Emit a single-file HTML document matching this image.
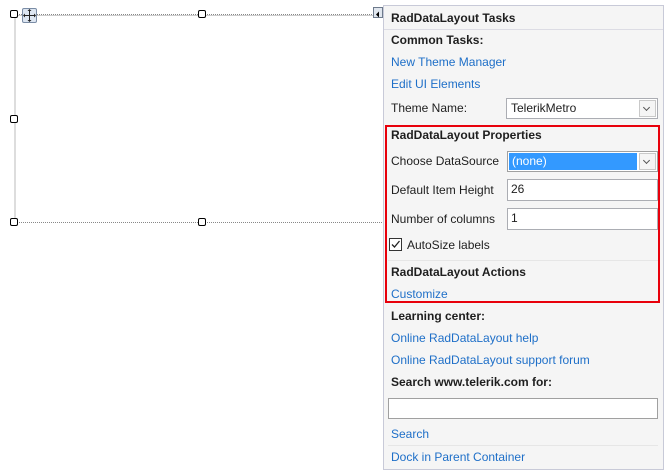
<!DOCTYPE html>
<html><head><style>
body{margin:0;width:666px;height:474px;background:#fff;position:relative;overflow:hidden;font-family:"Liberation Sans",sans-serif;font-size:12px;color:#1e1e1e}
.a{position:absolute;white-space:nowrap}
.b{font-weight:bold}
.l{color:#1e6fc8}
.h{position:absolute;width:6px;height:6px;border:1px solid #000;background:#fff;border-radius:2px}
.in{position:absolute;background:#fff;border:1px solid #abadb3;height:19px;box-sizing:border-box}
.dd{position:absolute;right:1px;top:1px;width:17px;height:17px;border:1px solid #c9c9c9;box-sizing:border-box;background:#f5f5f5}
.dd:after{content:"";position:absolute;left:4px;top:4px;width:4px;height:4px;border-right:1px solid #555;border-bottom:1px solid #555;transform:rotate(45deg)}
.sep{position:absolute;left:388px;width:270px;height:1px;background:#e6e6e6}
</style></head><body>
<div class="a" style="left:14px;top:14px;width:369px;height:207px;border-top:1px dotted #888;border-left:1px dotted #888;border-bottom:1px dotted #888"></div>
<div class="a" style="left:15px;top:15px;width:368px;height:1px;background:#ccc"></div>
<div class="a" style="left:14px;top:16px;width:2px;height:204px;background:#ddd"></div>
<div class="h" style="left:10px;top:10px"></div>
<div class="h" style="left:198px;top:10px"></div>
<div class="h" style="left:10px;top:115px"></div>
<div class="h" style="left:10px;top:218px"></div>
<div class="h" style="left:198px;top:218px"></div>
<div class="a" style="left:22px;top:8px;width:13px;height:13px;border:1px solid #7a8ca5;background:#dde6f2;border-radius:2px">
<svg width="13" height="13" viewBox="0 0 13 13"><path d="M6.5 1v11M1 6.5h11" stroke="#222" stroke-width="1"/><path d="M6.5 0l-2 2h4zM6.5 13l-2-2h4zM0 6.5l2-2v4zM13 6.5l-2-2v4z" fill="#222"/></svg></div>
<div class="a" style="left:373px;top:7px;width:8px;height:9px;border:1px solid #6d7a8c;background:#e0e6ee"><svg width="8" height="9"><path d="M5 1.5L2 4.5 5 7.5z" fill="#000"/></svg></div>
<div class="a" style="left:383px;top:5px;width:279px;height:463px;background:#f5f5f5;border:1px solid #c8cad8"></div>
<div class="a b" style="left:391px;top:11px">RadDataLayout Tasks</div>
<div class="a" style="left:384px;top:29px;width:279px;height:1px;background:#dcdce4"></div>
<div class="a b" style="left:391px;top:33px">Common Tasks:</div>
<div class="a l" style="left:391px;top:55px">New Theme Manager</div>
<div class="a l" style="left:391px;top:77px">Edit UI Elements</div>
<div class="a" style="left:391px;top:101px">Theme Name:</div>
<div class="in" style="left:506px;top:98px;width:152px;height:21px"><span class="a" style="left:4px;top:2px">TelerikMetro</span><div class="dd"></div></div>
<div class="a" style="left:385px;top:125px;width:271px;height:174px;border:2px solid #e8000b"></div>
<div class="a b" style="left:391px;top:128px">RadDataLayout Properties</div>
<div class="a" style="left:391px;top:154px">Choose DataSource</div>
<div class="in" style="left:507px;top:151px;width:151px;height:21px;border-color:#a0a0a0"><div class="a" style="left:1px;top:1px;width:128px;height:17px;background:#3399ff;color:#fff"><span style="position:relative;left:3px;top:1px">(none)</span></div><div class="dd"></div></div>
<div class="a" style="left:391px;top:183px">Default Item Height</div>
<div class="in" style="left:507px;top:179px;width:151px;height:22px"><span class="a" style="left:3px;top:2px">26</span></div>
<div class="a" style="left:391px;top:212px">Number of columns</div>
<div class="in" style="left:507px;top:208px;width:151px;height:22px"><span class="a" style="left:3px;top:2px">1</span></div>
<div class="a" style="left:389px;top:238px;width:11px;height:11px;border:1px solid #333;background:#fff"><svg width="11" height="11"><path d="M2 5.5l2.5 2.5L9.5 2" stroke="#222" stroke-width="1.3" fill="none"/></svg></div>
<div class="a" style="left:407px;top:238px">AutoSize labels</div>
<div class="sep" style="top:260px"></div>
<div class="a b" style="left:391px;top:265px">RadDataLayout Actions</div>
<div class="a l" style="left:391px;top:287px">Customize</div>
<div class="a b" style="left:391px;top:309px">Learning center:</div>
<div class="a l" style="left:391px;top:331px">Online RadDataLayout help</div>
<div class="a l" style="left:391px;top:353px">Online RadDataLayout support forum</div>
<div class="a b" style="left:391px;top:375px">Search www.telerik.com for:</div>
<div class="in" style="left:388px;top:398px;width:270px;height:21px;border-color:#a0a0a0"></div>
<div class="a l" style="left:391px;top:427px">Search</div>
<div class="sep" style="top:445px"></div>
<div class="a l" style="left:391px;top:450px">Dock in Parent Container</div>
</body></html>
